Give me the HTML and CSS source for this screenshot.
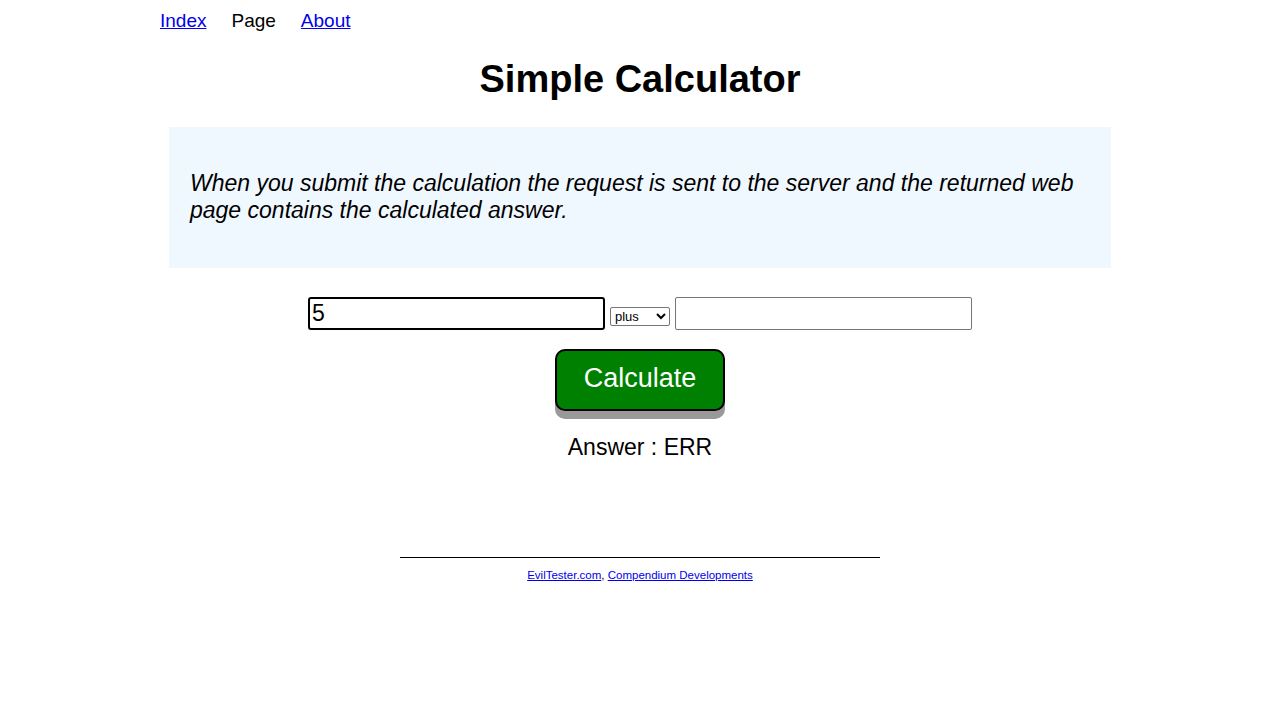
FILE: index.html
```html
<!DOCTYPE html>
<html>
<head>
<meta charset="utf-8">
<title>Simple Calculator</title>
<link rel="stylesheet" href="styles.css">
</head>
<body>
<div class="page">
  <nav class="nav">
    <a href="#">Index</a>
    <span>Page</span>
    <a href="#">About</a>
  </nav>
  <h1 class="title">Simple Calculator</h1>
  <div class="explain">
    <p>When you submit the calculation the request is sent to the server and the returned web page contains the calculated answer.</p>
  </div>
  <form class="calc">
    <div class="row">
      <input class="num focused" type="text" value="5">
      <select class="op"><option>plus</option><option>minus</option><option>times</option><option>divide</option></select>
      <input class="num" type="text" value="">
    </div>
    <div class="btnrow"><button type="button" class="btn">Calculate</button></div>
    <div class="answer">Answer : ERR</div>
  </form>
  <footer class="foot">
    <hr class="rule">
    <p><a href="#">EvilTester.com</a>, <a href="#">Compendium Developments</a></p>
  </footer>
</div>
</body>
</html>
```
FILE: styles.css
```css
html, body { margin: 0; padding: 0; background: #fff; }
body { font-family: "Liberation Sans", Arial, sans-serif; color: #000; }
.page { width: 960px; margin: 0 auto; }
.nav { display: flex; gap: 25px; font-size: 19px; height: 22px; padding-top: 10px; line-height: 22px; }
.nav a { color: #0000ee; text-decoration: underline; }
.title { text-align: center; font-size: 38px; font-weight: bold; margin: 26px 0 0; line-height: 43px; }
.explain { background: #f0f8ff; margin: 26px 9px 0; padding: 43px 21px 44px; }
.explain p { margin: 0; font-style: italic; font-size: 23px; line-height: 27px; }
.calc { margin-top: 29px; text-align: center; }
.row { display: flex; justify-content: center; align-items: flex-start; gap: 5px; }
.num { width: 297px; height: 33px; box-sizing: border-box; border: 1px solid #767676; border-radius: 2px; font-family: "Liberation Sans", Arial, sans-serif; font-size: 23px; padding: 1px 2px; margin: 0; }
.num.focused { border: 2px solid #000; border-radius: 3px; }
.op { width: 60px; height: 19px; margin-top: 10px; font-size: 13px; font-family: "Liberation Sans", Arial, sans-serif; padding: 0; border: 1px solid #767676; border-radius: 2px; background: #fff; }
.btnrow { margin-top: 19px; display: flex; justify-content: center; }
.btn { width: 170px; height: 62px; background: #008000; color: #fff; font-size: 27px; font-family: "Liberation Sans", Arial, sans-serif; border: 2px solid #000; border-radius: 10px; box-shadow: 0 8px 0 #999; cursor: pointer; padding: 0 0 3px; }
.answer { font-size: 23px; margin-top: 23px; line-height: 26px; }
.foot { margin-top: 97px; text-align: center; }
.rule { width: 480px; margin: 0 auto; border: none; border-top: 1px solid #000; height: 0; }
.foot p { font-size: 11.5px; margin: 11px 0 0; }
.foot a { color: #0000ee; }
```
